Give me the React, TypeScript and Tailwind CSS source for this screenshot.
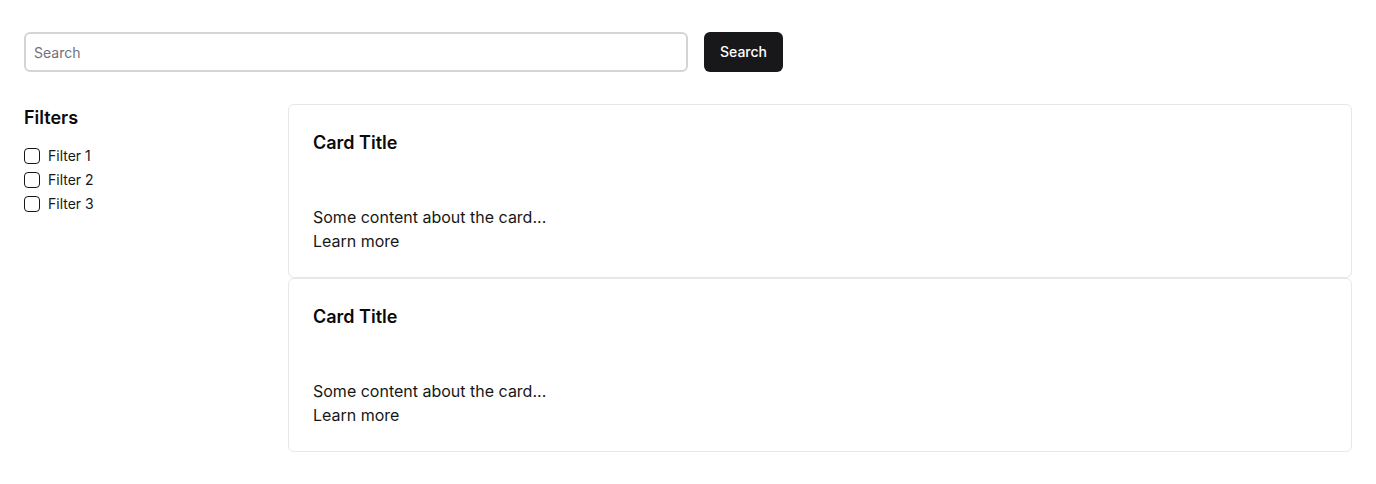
import React from "react";

function Card() {
  return (
    <div className="rounded-md border border-[#e5e7eb] bg-white px-6 pt-6 pb-[23px]">
      <h3 className="text-lg font-semibold leading-7 text-[#0a0a0a]">Card Title</h3>
      <div className="mt-12 text-base leading-6 text-[#171717]">
        <p>Some content about the card...</p>
        <p className="leading-[25px]">Learn more</p>
      </div>
    </div>
  );
}

export default function App() {
  return (
    <div className="min-h-[484px] bg-white p-6 pt-8" style={{ fontFamily: "Inter, 'Noto Sans', sans-serif" }}>
      <div className="flex items-center gap-4">
        <input
          placeholder="Search"
          className="h-10 w-[664px] rounded-md border-2 border-[#d4d4d8] px-2 text-sm text-[#171717] placeholder:text-[#71717a] outline-none"
        />
        <button className="h-10 w-[79px] rounded-md bg-[#18181b] text-sm font-medium text-white">Search</button>
      </div>
      <div className="mt-8 flex gap-6">
        <aside className="w-60 shrink-0">
          <h2 className="text-lg font-semibold leading-7 text-[#0a0a0a]">Filters</h2>
          <div className="mt-3 flex flex-col">
            {["Filter 1", "Filter 2", "Filter 3"].map((f) => (
              <label key={f} className="flex h-6 items-center gap-2 text-sm text-[#171717]">
                <span className="h-4 w-4 rounded-[4px] border border-[#171717]" />
                {f}
              </label>
            ))}
          </div>
        </aside>
        <main className="flex flex-1 flex-col">
          <Card />
          <Card />
        </main>
      </div>
    </div>
  );
}
